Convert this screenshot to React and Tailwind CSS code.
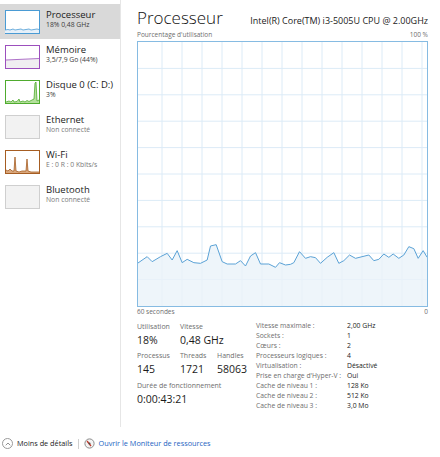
import { ChevronUp } from 'lucide-react';

const graphPts = [
  [36,130],[65,110],[80,125],[105,110],[125,100],[140,120],[155,92],[170,128],[185,118],[205,128],
  [225,130],[245,120],[255,78],[272,74],[290,125],[305,132],[330,132],[345,122],[360,138],[375,108],
  [390,98],[405,132],[430,132],[450,142],[462,128],[480,135],[495,133],[505,128],[522,95],[540,115],
  [555,110],[570,113],[585,130],[605,112],[625,98],[640,130],[655,122],[672,105],[690,115],[730,105],
  [745,122],[760,118],[775,102],[790,112],[803,102],[820,115],[835,105],[850,80],[865,86],[878,115],
  [893,92],[905,112],
].map(([x, y]) => [x / 3 - 12.5, 178 + y / 3]);

function Thumb({ kind }) {
  if (kind === 'cpu') {
    const pts = '0,20 3,19.5 5,20 8,19 10,20 13,19.5 16,19 18,20 21,19.5 24,19 26,20 29,19.5 32,19 34,19.5';
    return (
      <svg width="35" height="24" viewBox="0 0 35 24">
        <rect x="0.5" y="0.5" width="34" height="23" fill="#fff" stroke="#4a9bd4" />
        <polygon points={`${pts} 34,23 0,23`} fill="#e6f0f9" />
        <polyline points={pts} fill="none" stroke="#4a9bd4" strokeWidth="0.8" />
      </svg>
    );
  }
  if (kind === 'mem') {
    return (
      <svg width="35" height="24" viewBox="0 0 35 24">
        <rect x="0.5" y="0.5" width="34" height="23" fill="#fff" stroke="#9c4fbd" />
        <polygon points="1,15 34,13.5 34,23 1,23" fill="#f0eef1" />
        <polyline points="1,15 34,13.5" fill="none" stroke="#9c4fbd" strokeWidth="0.8" />
      </svg>
    );
  }
  if (kind === 'disk') {
    const pts = '1,22 4,21 6,22 8,20 9,22 12,21.5 14,19 15,22 18,21 20,22 22,20.5 24,21.5 27,20 29,19 30,3 31,2 32,21 34,20';
    return (
      <svg width="35" height="24" viewBox="0 0 35 24">
        <rect x="0.5" y="0.5" width="34" height="23" fill="#fff" stroke="#4fab2e" />
        <polygon points={`${pts} 34,23 1,23`} fill="#b4e09c" />
        <polyline points={pts} fill="none" stroke="#4fab2e" strokeWidth="0.8" />
      </svg>
    );
  }
  if (kind === 'wifi') {
    const pts = '1,20 3,21 5,19 7,21 9,21 10,7 11,21 14,22 17,21 21,21 22,9 23,21 26,22 30,22 34,22';
    return (
      <svg width="35" height="24" viewBox="0 0 35 24">
        <rect x="0.5" y="0.5" width="34" height="23" fill="#fff" stroke="#a65d22" />
        <polygon points={`${pts} 34,23 1,23`} fill="#d9a77c" />
        <polyline points={pts} fill="none" stroke="#a65d22" strokeWidth="0.8" />
      </svg>
    );
  }
  return (
    <svg width="35" height="24" viewBox="0 0 35 24">
      <rect x="0.5" y="0.5" width="34" height="23" fill="#f2f2f2" stroke="#cfcfcf" />
    </svg>
  );
}

const items = [
  { kind: 'cpu', title: 'Processeur', sub: '18% 0,48 GHz', active: true },
  { kind: 'mem', title: 'Mémoire', sub: '3,5/7,9 Go (44%)' },
  { kind: 'disk', title: 'Disque 0 (C: D:)', sub: '3%' },
  { kind: 'off', title: 'Ethernet', sub: 'Non connecté', muted: true },
  { kind: 'wifi', title: 'Wi-Fi', sub: 'E : 0 R : 0 Kbits/s', muted: true },
  { kind: 'off', title: 'Bluetooth', sub: 'Non connecté', muted: true },
];

const specs = [
  ['Vitesse maximale :', '2,00 GHz'],
  ['Sockets :', '1'],
  ['Cœurs :', '2'],
  ['Processeurs logiques :', '4'],
  ['Virtualisation :', 'Désactivé'],
  ["Prise en charge d'Hyper-V :", 'Oui'],
  ['Cache de niveau 1 :', '128 Ko'],
  ['Cache de niveau 2 :', '512 Ko'],
  ['Cache de niveau 3 :', '3,0 Mo'],
];

function Stat({ label, value, className = '' }) {
  return (
    <div className={className}>
      <div className="text-[7px] leading-[9px] text-[#6e6e6e]">{label}</div>
      <div className="mt-[2px] text-[10.5px] leading-[14px] text-[#1b1b1b]">{value}</div>
    </div>
  );
}

export default function App() {
  const line = graphPts.map(p => p.join(',')).join(' ');
  const last = graphPts[graphPts.length - 1];

  return (
    <div className="w-[440px] h-[457px] bg-white flex flex-col font-['Open_Sans',sans-serif] overflow-hidden">
      <div className="flex h-[427px]">
        {/* side list */}
        <div className="w-[121px] border-r border-[#e6e6e6] pt-[4px]">
          {items.map(it => (
            <div
              key={it.title}
              className={`h-[35px] flex items-start pl-[5px] ${it.active ? 'bg-[#d9d9d9]' : ''}`}
            >
              <div className="mt-[6px]"><Thumb kind={it.kind} /></div>
              <div className="ml-[6px] mt-[5px]">
                <div className="text-[9.5px] leading-[12px] text-[#1b1b1b] whitespace-nowrap">{it.title}</div>
                <div className={`text-[6.8px] leading-[8px] whitespace-nowrap ${it.muted ? 'text-[#7a7a7a]' : 'text-[#3c3c3c]'}`}>
                  {it.sub}
                </div>
              </div>
            </div>
          ))}
        </div>

        {/* main */}
        <div className="flex-1 pl-[16px] pr-[12px] pt-[8px]">
          <div className="flex items-baseline justify-between h-[20px] leading-[20px]">
            <span className="text-[17px] font-light text-[#111]">Processeur</span>
            <span className="text-[9px] text-[#1b1b1b]">Intel(R) Core(TM) i3-5005U CPU @ 2.00GHz</span>
          </div>
          <div className="mt-[3px] flex justify-between text-[6.5px] leading-[8px] text-[#6e6e6e]">
            <span>Pourcentage d'utilisation</span>
            <span>100 %</span>
          </div>
          <div className="mt-[2px] h-[266px] border border-[#86bbe2]">
            <svg width="289" height="264" viewBox="0 0 289 264" className="block">
              {Array.from({ length: 14 }, (_, k) => (
                <line key={'v' + k} x1={24 + 20 * k} y1="0" x2={24 + 20 * k} y2="264" stroke="#dcebf7" strokeWidth="1" />
              ))}
              {Array.from({ length: 9 }, (_, k) => (
                <line key={'h' + k} x1="0" y1={26.4 * (k + 1)} x2="289" y2={26.4 * (k + 1)} stroke="#dcebf7" strokeWidth="1" />
              ))}
              <polygon points={`${line} ${last[0]},264 ${graphPts[0][0]},264`} fill="#eaf2f9" fillOpacity="0.8" />
              <polyline points={line} fill="none" stroke="#5aa2d6" strokeWidth="1" strokeLinejoin="round" />
            </svg>
          </div>
          <div className="flex justify-between text-[6.5px] leading-[9px] text-[#6e6e6e]">
            <span>60 secondes</span>
            <span>0</span>
          </div>

          <div className="mt-[6px] flex">
            <div className="w-[119px] flex flex-col gap-[4px]">
              <div className="flex">
                <Stat label="Utilisation" value="18%" className="w-[43px]" />
                <Stat label="Vitesse" value="0,48 GHz" />
              </div>
              <div className="flex">
                <Stat label="Processus" value="145" className="w-[43px]" />
                <Stat label="Threads" value="1721" className="w-[37px]" />
                <Stat label="Handles" value="58063" />
              </div>
              <Stat label="Durée de fonctionnement" value="0:00:43:21" className="mt-[1px]" />
            </div>
            <div className="grid grid-cols-[91px_1fr] text-[6.8px] leading-[10px] -mt-[1px]">
              {specs.map(([k, v]) => (
                <div key={k} className="contents">
                  <span className="text-[#6e6e6e] whitespace-nowrap">{k}</span>
                  <span className="text-[#1b1b1b] whitespace-nowrap">{v}</span>
                </div>
              ))}
            </div>
          </div>
        </div>
      </div>

      {/* footer */}
      <div className="flex-1 flex items-center pl-[2px] pt-[3px] text-[7.3px]">
        <span className="w-[11px] h-[11px] rounded-full border border-[#9a9a9a] flex items-center justify-center">
          <ChevronUp size={8} strokeWidth={2} className="text-[#5a5a5a]" />
        </span>
        <span className="ml-[4px] text-[#1b1b1b]">Moins de détails</span>
        <span className="ml-[6px] h-[10px] border-l border-[#cfcfcf]" />
        <svg width="11" height="11" viewBox="0 0 11 11" className="ml-[5px]">
          <circle cx="5.5" cy="5.5" r="4.6" fill="#f4f4f4" stroke="#8a8a8a" strokeWidth="1" />
          <line x1="3" y1="3" x2="7" y2="8" stroke="#c0392b" strokeWidth="1.3" />
          <circle cx="5.5" cy="5.5" r="1" fill="#4a4a4a" />
        </svg>
        <span className="ml-[3px] text-[#1d63c1]">Ouvrir le Moniteur de ressources</span>
      </div>
    </div>
  );
}
